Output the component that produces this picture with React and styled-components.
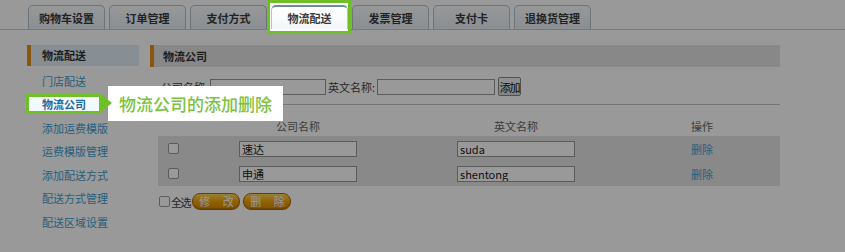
import React from "react";
import styled, { createGlobalStyle } from "styled-components";

const GlobalStyle = createGlobalStyle`
  html, body {
    margin: 0;
    padding: 0;
    background: #fff;
  }
  body {
    font-family: "Noto Sans CJK SC", "DejaVu Sans", sans-serif;
    font-size: 11px;
    color: #333;
  }
`;

const tabs = ["购物车设置", "订单管理", "支付方式", "物流配送", "发票管理", "支付卡", "退换货管理"];
const sideLinks = ["门店配送", "物流公司", "添加运费模版", "运费模版管理", "添加配送方式", "配送方式管理", "配送区域设置"];
const companies = [
  { name: "速达", en: "suda" },
  { name: "申通", en: "shentong" },
];

function App() {
  return (
    <Page>
      <GlobalStyle />
      <TabBar>
        {tabs.map((t) =>
          t === "物流配送" ? (
            <TabFrame key={t}>
              <Tab $active>{t}</Tab>
            </TabFrame>
          ) : (
            <Tab key={t}>{t}</Tab>
          )
        )}
      </TabBar>
      <Main>
        <Sidebar>
          <SideHeader>物流配送</SideHeader>
          <SideList>
            {sideLinks.map((l) =>
              l === "物流公司" ? (
                <SideRow key={l}>
                  <SideFrame>
                    <SideLink $active>{l}</SideLink>
                    <Tip>
                      <TipArrow />
                      物流公司的添加删除
                    </Tip>
                  </SideFrame>
                </SideRow>
              ) : (
                <SideRow key={l}>
                  <SideLink>{l}</SideLink>
                </SideRow>
              )
            )}
          </SideList>
        </Sidebar>
        <Content>
          <PanelHeader>物流公司</PanelHeader>
          <FormRow>
            <Label>公司名称:</Label>
            <TextInput $w={116} />
            <Label>英文名称:</Label>
            <TextInput $w={118} />
            <AddButton>添加</AddButton>
          </FormRow>
          <Table>
            <HeadRow>
              <Cell />
              <Cell>公司名称</Cell>
              <Cell>英文名称</Cell>
              <Cell>操作</Cell>
            </HeadRow>
            <Body>
              {companies.map((c) => (
                <DataRow key={c.en}>
                  <Cell>
                    <Check type="checkbox" />
                  </Cell>
                  <Cell>
                    <TextInput $w={118} defaultValue={c.name} />
                  </Cell>
                  <Cell>
                    <TextInput $w={118} defaultValue={c.en} />
                  </Cell>
                  <Cell>
                    <DelLink>删除</DelLink>
                  </Cell>
                </DataRow>
              ))}
            </Body>
          </Table>
          <Actions>
            <Check type="checkbox" />
            <SelectAll>全 选</SelectAll>
            <GoldButton>修 改</GoldButton>
            <GoldButton>删 除</GoldButton>
          </Actions>
        </Content>
      </Main>
      <Overlay />
    </Page>
  );
}

const Page = styled.div`
  position: relative;
  width: 845px;
  height: 252px;
  overflow: hidden;
  background: #fff;
`;

const Overlay = styled.div`
  position: absolute;
  inset: 0;
  background: rgba(0, 0, 0, 0.4);
  z-index: 10;
`;

const TabBar = styled.div`
  display: flex;
  align-items: flex-end;
  gap: 4px;
  padding: 5px 0 0 28px;
  height: 24px;
  border-bottom: 1px solid #c2ccd2;
`;

const Tab = styled.div`
  box-sizing: border-box;
  width: 77px;
  height: 24px;
  display: flex;
  align-items: center;
  justify-content: center;
  border: 1px solid #b3c3cd;
  border-bottom: none;
  border-radius: 5px 5px 0 0;
  background: ${(p) =>
    p.$active
      ? "linear-gradient(#ffffff, #f3f7fa)"
      : "linear-gradient(#fbfdff, #e6eef4)"};
  border-top-color: ${(p) => (p.$active ? "#6f8ba0" : "#b3c3cd")};
  border-top-width: ${(p) => (p.$active ? "2px" : "1px")};
  font-weight: bold;
  font-size: 11px;
  color: #3a3a3a;
`;

const TabFrame = styled.div`
  position: relative;
  z-index: 20;
  display: flex;
  margin: -5px -3px -5px -4px;
  padding: 2px 0 2px 1px;
  border: 3px solid #6fbf26;
  background: #fff;
`;

const Main = styled.div`
  display: flex;
  padding: 15px 0 0 27px;
`;

const Sidebar = styled.div`
  width: 112px;
  flex-shrink: 0;
`;

const SideHeader = styled.div`
  height: 21px;
  line-height: 21px;
  padding-left: 11px;
  border-left: 4px solid #e8921c;
  background: #e1eff7;
  font-weight: bold;
  color: #333;
`;

const SideList = styled.div`
  display: flex;
  flex-direction: column;
  padding-top: 3px;
`;

const SideRow = styled.div`
  height: 23.5px;
  display: flex;
  align-items: center;
`;

const SideFrame = styled.div`
  position: relative;
  z-index: 20;
  box-sizing: border-box;
  width: 76px;
  height: 20px;
  margin-left: -1px;
  display: flex;
  align-items: center;
  border: 3px solid #6fbf26;
  background: #f3fafd;
`;

const SideLink = styled.a`
  padding-left: ${(p) => (p.$active ? "13px" : "15px")};
  color: ${(p) => (p.$active ? "#1f6a9c" : "#3f9ed0")};
  font-weight: ${(p) => (p.$active ? "bold" : "normal")};
  text-decoration: none;
  white-space: nowrap;
`;

const Tip = styled.div`
  position: absolute;
  left: 79px;
  top: -11px;
  width: 175px;
  height: 35px;
  box-sizing: border-box;
  padding-left: 11px;
  display: flex;
  align-items: center;
  background: #fff;
  color: #7cc23e;
  font-size: 17px;
  font-weight: 500;
  white-space: nowrap;
`;

const TipArrow = styled.span`
  position: absolute;
  left: -7px;
  top: 8px;
  width: 0;
  height: 0;
  border-top: 9.5px solid transparent;
  border-bottom: 9.5px solid transparent;
  border-left: 11px solid #6fbf26;
`;

const Content = styled.div`
  width: 630px;
  margin-left: 11px;
`;

const PanelHeader = styled.div`
  height: 22px;
  line-height: 22px;
  padding-left: 9px;
  border-left: 4px solid #e8921c;
  background: #e3e3e3;
  font-weight: bold;
  color: #333;
`;

const FormRow = styled.div`
  display: flex;
  align-items: center;
  gap: 2px;
  height: 38px;
  padding: 2px 0 0 11px;
  border-bottom: 1px solid #c4c4c4;
  box-sizing: border-box;
`;

const Label = styled.span`
  color: #444;
  white-space: nowrap;
`;

const TextInput = styled.input`
  box-sizing: border-box;
  width: ${(p) => p.$w}px;
  height: 16px;
  padding: 0 2px;
  margin: 0;
  border: 1px solid #9a9a9a;
  background: #fff;
  font-family: "Noto Sans CJK SC", "DejaVu Sans", sans-serif;
  font-size: 11px;
  color: #222;
  outline: none;
`;

const AddButton = styled.button`
  box-sizing: border-box;
  width: 23px;
  height: 19px;
  padding: 0;
  margin-left: 1px;
  border: 1px solid #888;
  border-radius: 2px;
  background: linear-gradient(#f4f4f4, #dcdcdc);
  font-family: "Noto Sans CJK SC", sans-serif;
  font-size: 11px;
  color: #111;
  white-space: nowrap;
  letter-spacing: -1px;
`;

const Table = styled.div`
  margin: 11px 0 0 8px;
`;

const cols = "30px 220px 216px 156px";

const HeadRow = styled.div`
  display: grid;
  grid-template-columns: ${cols};
  height: 20px;
  align-items: center;
  color: #666;
`;

const Body = styled.div`
  background: #e5e5e5;
`;

const DataRow = styled.div`
  display: grid;
  grid-template-columns: ${cols};
  height: 25px;
  align-items: center;
`;

const Cell = styled.div`
  display: flex;
  justify-content: center;
  align-items: center;
`;

const Check = styled.input`
  appearance: none;
  box-sizing: border-box;
  width: 11px;
  height: 11px;
  margin: 0;
  border: 1px solid #9a9a9a;
  border-radius: 2px;
  background: #fff;
`;

const DelLink = styled.a`
  color: #3f9ed0;
  text-decoration: none;
`;

const Actions = styled.div`
  display: flex;
  align-items: center;
  margin-top: 7px;
  padding-left: 9px;
  height: 17px;
`;

const SelectAll = styled.span`
  margin-left: 1px;
  color: #444;
  letter-spacing: -2px;
  white-space: nowrap;
`;

const GoldButton = styled.button`
  box-sizing: border-box;
  width: 48px;
  height: 17px;
  margin-left: 3px;
  padding: 0;
  border: 1px solid #a86c00;
  border-radius: 8px;
  background: linear-gradient(#ffd460, #f2a500 50%, #d68600);
  box-shadow: inset 0 -1px 0 #b87400;
  font-family: "Noto Sans CJK SC", sans-serif;
  font-size: 11px;
  line-height: 15px;
  color: #fff;
  letter-spacing: 5px;
  text-indent: 5px;
  white-space: nowrap;
`;

export default App;
